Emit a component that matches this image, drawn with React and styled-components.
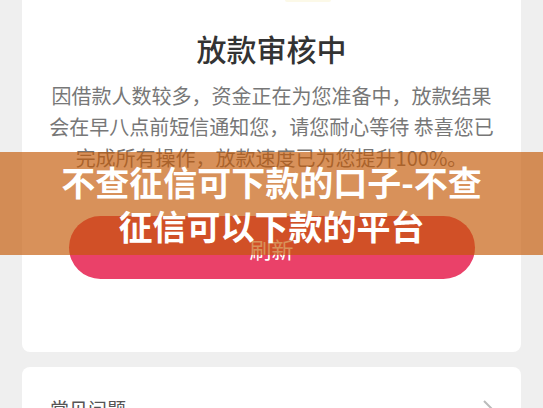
import styled, { createGlobalStyle } from 'styled-components'

const GlobalStyle = createGlobalStyle`
  html, body {
    margin: 0;
    padding: 0;
    background: #efefef;
  }
  body {
    font-family: "Noto Sans CJK SC", "Noto Sans", sans-serif;
  }
`

const Page = styled.main`
  position: relative;
  min-height: 100vh;
  padding: 0 22px 20px;
  box-sizing: border-box;
  overflow: hidden;
`

const Card = styled.section`
  background: #fff;
  border-radius: ${(p) => (p.$cut ? '0 0 8px 8px' : '8px')};
  display: flex;
  flex-direction: column;
  align-items: center;
  padding: ${(p) => p.$pad};
  margin-top: ${(p) => p.$gap || '0'};
`

// bottom edge of the illustration sitting above the viewport
const Peek = styled.div`
  width: 46px;
  height: 2px;
  margin-left: 72px;
  border-radius: 0 0 23px 23px;
  background: #fcf9e8;
`

const Title = styled.h1`
  margin: 26px 0 0;
  font-size: 30px;
  line-height: 40px;
  font-weight: 500;
  color: #333;
`

const Message = styled.p`
  margin: 12px 0 0;
  font-size: 20px;
  line-height: 31px;
  color: #777;
  text-align: center;
`

const RefreshButton = styled.button`
  margin-top: 43px;
  width: 406px;
  height: 63px;
  border: none;
  border-radius: 32px;
  background: #ea4169;
  color: #fff;
  font-family: inherit;
  font-size: 22px;
  cursor: pointer;
`

const FaqRow = styled.div`
  width: 100%;
  display: flex;
  align-items: center;
  justify-content: space-between;
  font-size: 19px;
  color: #555;
`

const Chevron = styled.svg`
  width: 14px;
  height: 20px;
  margin-right: 2px;
`

const Banner = styled.div`
  position: absolute;
  left: 0;
  right: 0;
  top: 152px;
  height: 103px;
  box-sizing: border-box;
  padding: 0 50px;
  display: flex;
  align-items: center;
  justify-content: center;
  background: rgba(196, 88, 5, 0.66);
`

const BannerText = styled.h2`
  margin: 0;
  font-size: 34px;
  line-height: 44px;
  font-weight: 700;
  color: #fff;
  text-align: center;
`

const App = () => {
  return (
    <>
      <GlobalStyle />
      <Page>
        <Card $cut $pad="0 26px 73px">
          <Peek />
          <Title>放款审核中</Title>
          <Message>
            因借款人数较多，资金正在为您准备中，放款结果会在早八点前短信通知您，请您耐心等待 恭喜您已完成所有操作，放款速度已为您提升100%。
          </Message>
          <RefreshButton>刷新</RefreshButton>
        </Card>
        <Card $gap="15px" $pad="28px 24px 28px 28px">
          <FaqRow>
            <span>常见问题</span>
            <Chevron viewBox="0 0 14 20">
              <path d="M3 2 L11 10 L3 18" fill="none" stroke="#bbb" strokeWidth="2" />
            </Chevron>
          </FaqRow>
        </Card>
        <Banner>
          <BannerText>不查征信可下款的口子-不查征信可以下款的平台</BannerText>
        </Banner>
      </Page>
    </>
  )
}

export default App
